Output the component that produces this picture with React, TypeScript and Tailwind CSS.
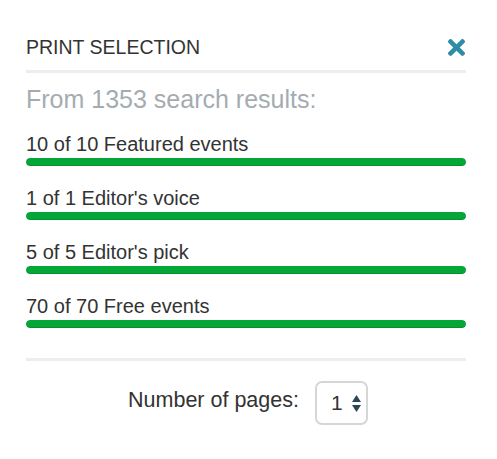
import React from "react";

const rows = [
  { label: "10 of 10 Featured events", pct: 100 },
  { label: "1 of 1 Editor's voice", pct: 100 },
  { label: "5 of 5 Editor's pick", pct: 100 },
  { label: "70 of 70 Free events", pct: 100 },
];

function CloseIcon() {
  return (
    <svg viewBox="0 80 352 352" className="w-[17px] h-[17px]" fill="#2e8ca7">
      <path d="M242.72 256l100.07-100.07c12.28-12.28 12.28-32.19 0-44.48l-22.24-22.24c-12.28-12.28-32.19-12.28-44.48 0L176 189.28 75.93 89.21c-12.28-12.28-32.19-12.28-44.48 0L9.21 111.45c-12.28 12.28-12.28 32.19 0 44.48L109.28 256 9.21 356.07c-12.28 12.28-12.28 32.19 0 44.48l22.24 22.24c12.28 12.28 32.2 12.28 44.48 0L176 322.72l100.07 100.07c12.28 12.28 32.2 12.28 44.48 0l22.24-22.24c12.28-12.28 12.28-32.19 0-44.48L242.72 256z" />
    </svg>
  );
}

export default function App() {
  return (
    <div className="w-[497px] h-[459px] bg-white font-['Liberation_Sans',Arial,sans-serif] text-[#333]">
      <div className="ml-[26px] w-[440px] pt-[36px]">
        {/* Header */}
        <div className="flex items-center justify-between">
          <h2 className="text-[19.5px] leading-[22px] font-normal">PRINT SELECTION</h2>
          <button aria-label="Close" className="mr-[1px]">
            <CloseIcon />
          </button>
        </div>
        <div className="mt-[12px] h-[3px] bg-[#eeeeee]" />

        <p className="mt-[11px] text-[25px] leading-[30px] text-[#a4acb2]">From 1353 search results:</p>

        {/* Progress rows */}
        <div className="mt-[18px] flex flex-col gap-[20px]">
          {rows.map((r) => (
            <div key={r.label}>
              <div className="text-[20px] leading-[24px]">{r.label}</div>
              <div className="mt-[2px] h-[8px] rounded-[4px] bg-[#f2f2f2] overflow-hidden">
                <div
                  className="h-full rounded-[4px] bg-[#04a637] shadow-[inset_0_-1px_0_rgba(0,0,0,0.12)]"
                  style={{ width: `${r.pct}%` }}
                />
              </div>
            </div>
          ))}
        </div>

        <div className="mt-[30px] h-[3px] bg-[#eeeeee]" />

        {/* Pages */}
        <div className="mt-[20px] flex items-center justify-center gap-[16px] pl-[4px]">
          <span className="text-[21.5px] leading-[24px] pb-[6px]">Number of pages:</span>
          <div className="w-[53px] h-[44px] rounded-[7px] border-2 border-[#d6d6d6] flex items-center pl-[14px] gap-[9px]">
            <span className="text-[21px] leading-[24px] text-[#333]">1</span>
            <svg viewBox="0 0 9 17" className="w-[9px] h-[17px]" fill="#2c4656">
              <path d="M4.5 0 L9 7 L0 7 Z" />
              <path d="M0 10 L9 10 L4.5 17 Z" />
            </svg>
          </div>
        </div>
      </div>
    </div>
  );
}
